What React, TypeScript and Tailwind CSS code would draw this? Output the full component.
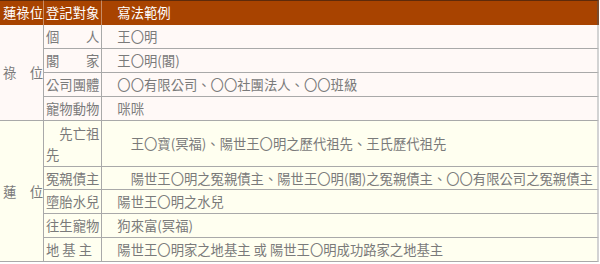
import React from 'react';

type Row = { target: string; example: string };

const luRows: Row[] = [
  { target: '個　　人', example: '　王〇明' },
  { target: '閣　　家', example: '　王〇明(閣)' },
  { target: '公司團體', example: '　〇〇有限公司、〇〇社團法人、〇〇班級' },
  { target: '寵物動物', example: '　咪咪' },
];

const lianRows: Row[] = [
  { target: '　先亡祖先', example: '　　王〇寶(冥福)、陽世王〇明之歷代祖先、王氏歷代祖先' },
  { target: '冤親債主', example: '　　陽世王〇明之冤親債主、陽世王〇明(閣)之冤親債主、〇〇有限公司之冤親債主' },
  { target: '墮胎水兒', example: '　陽世王〇明之水兒' },
  { target: '往生寵物', example: '　狗來富(冥福)' },
  { target: '地 基 主', example: '　陽世王〇明家之地基主 或 陽世王〇明成功路家之地基主' },
];

const cell = 'flex items-center border-b border-r border-[#a9a9a9] leading-[21px]';

function Group({ label, rows, bg, start }: { label: string; rows: Row[]; bg: string; start: string }) {
  return (
    <>
      <div className={`${cell} ${bg} ${start} pl-[3px]`}>{label}</div>
      {rows.map((r) => (
        <React.Fragment key={r.target}>
          <div className={`${cell} ${bg} pl-[2px] pr-[1px] whitespace-pre-wrap`}>{r.target}</div>
          <div className={`${cell} ${bg} pl-[2px] whitespace-pre-wrap border-r-2 border-r-[#d3d3d3]`}>{r.example}</div>
        </React.Fragment>
      ))}
    </>
  );
}

export default function App() {
  return (
    <div className="w-[600px] h-[264px] bg-white">
      <div
        className="w-[599px] grid grid-cols-[44px_58px_497px] grid-rows-[25px_24px_24px_24px_24px_46px_23px_24px_24px_24px] text-[13.33px] text-[#7a7a7a] [text-spacing-trim:space-all]"
        style={{ fontFamily: '"Noto Sans CJK TC", "Noto Sans", sans-serif' }}
      >
        <div className="flex items-center pl-[3px] bg-[#a84300] text-white border-t border-t-[#5e2a0a] border-r border-r-[#c98d66]">蓮祿位</div>
        <div className="flex items-center pl-[2px] bg-[#a84300] text-white border-t border-t-[#5e2a0a] border-r border-r-[#c98d66] whitespace-pre">登記對象</div>
        <div className="flex items-center pl-[2px] bg-[#a84300] text-white border-t border-t-[#5e2a0a] border-r-2 border-r-[#7a4a2a] whitespace-pre">　寫法範例</div>

        <Group label="祿　位" rows={luRows} bg="bg-[#fff9f7]" start="row-span-4" />
        <Group label="蓮　位" rows={lianRows} bg="bg-[#fffff0]" start="row-span-5" />
      </div>
    </div>
  );
}
